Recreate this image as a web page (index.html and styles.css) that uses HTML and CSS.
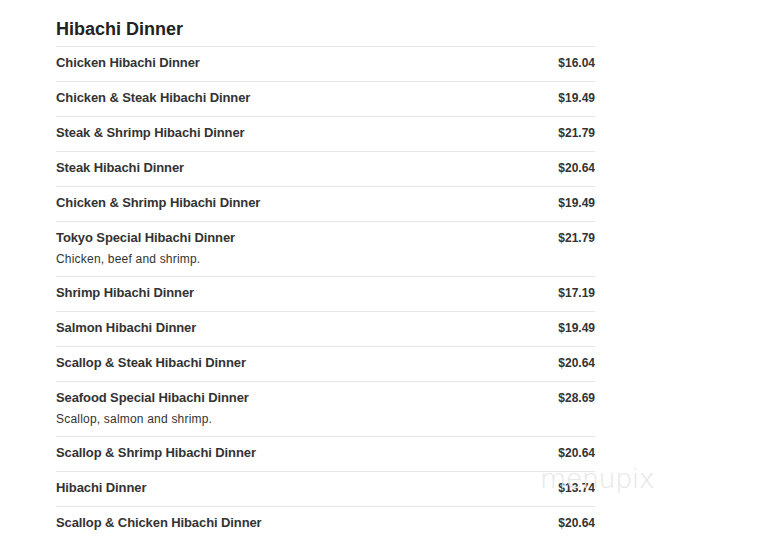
FILE: index.html
```html
<!DOCTYPE html>
<html>
<head>
<meta charset="utf-8">
<link rel="stylesheet" href="styles.css">
</head>
<body>
<div class="menu">
  <h2 class="title">Hibachi Dinner</h2>
  <div class="list">
    <div class="row"><div class="info"><div class="name">Chicken Hibachi Dinner</div></div><div class="price">$16.04</div></div>
    <div class="row"><div class="info"><div class="name">Chicken &amp; Steak Hibachi Dinner</div></div><div class="price">$19.49</div></div>
    <div class="row"><div class="info"><div class="name">Steak &amp; Shrimp Hibachi Dinner</div></div><div class="price">$21.79</div></div>
    <div class="row"><div class="info"><div class="name">Steak Hibachi Dinner</div></div><div class="price">$20.64</div></div>
    <div class="row"><div class="info"><div class="name">Chicken &amp; Shrimp Hibachi Dinner</div></div><div class="price">$19.49</div></div>
    <div class="row"><div class="info"><div class="name">Tokyo Special Hibachi Dinner</div><div class="desc">Chicken, beef and shrimp.</div></div><div class="price">$21.79</div></div>
    <div class="row"><div class="info"><div class="name">Shrimp Hibachi Dinner</div></div><div class="price">$17.19</div></div>
    <div class="row"><div class="info"><div class="name">Salmon Hibachi Dinner</div></div><div class="price">$19.49</div></div>
    <div class="row"><div class="info"><div class="name">Scallop &amp; Steak Hibachi Dinner</div></div><div class="price">$20.64</div></div>
    <div class="row"><div class="info"><div class="name">Seafood Special Hibachi Dinner</div><div class="desc">Scallop, salmon and shrimp.</div></div><div class="price">$28.69</div></div>
    <div class="row"><div class="info"><div class="name">Scallop &amp; Shrimp Hibachi Dinner</div></div><div class="price">$20.64</div></div>
    <div class="row"><div class="info"><div class="name">Hibachi Dinner</div></div><div class="price">$13.74</div></div>
    <div class="row"><div class="info"><div class="name">Scallop &amp; Chicken Hibachi Dinner</div></div><div class="price">$20.64</div></div>
  </div>
  <div class="watermark">menupix</div>
</div>
</body>
</html>
```

FILE: styles.css
```css
html, body {
  margin: 0;
  padding: 0;
  background: #ffffff;
}
body {
  font-family: "Liberation Sans", Arial, sans-serif;
  color: #333333;
}
.menu {
  position: relative;
  width: 539px;
  padding: 18px 0 0 56px;
}
.title {
  margin: 0 0 6px 0;
  font-size: 18px;
  line-height: 22px;
  font-weight: bold;
  color: #222222;
}
.row {
  display: flex;
  justify-content: space-between;
  align-items: flex-start;
  border-top: 1px solid #e6e6e6;
  padding: 8px 0 10px 0;
}
.name {
  font-size: 13px;
  line-height: 16px;
  font-weight: bold;
  letter-spacing: -0.1px;
  color: #333333;
}
.desc {
  margin: 5px 0 -1px 0;
  font-size: 12px;
  line-height: 16px;
  letter-spacing: 0.2px;
  color: #333333;
}
.price {
  font-size: 12px;
  line-height: 16px;
  font-weight: bold;
  color: #333333;
}
.watermark {
  position: absolute;
  left: 540px;
  top: 463px;
  font-family: "DejaVu Sans", sans-serif;
  font-size: 27px;
  font-weight: 200;
  letter-spacing: -0.5px;
  color: #e6e6e6;
  pointer-events: none;
}
```
